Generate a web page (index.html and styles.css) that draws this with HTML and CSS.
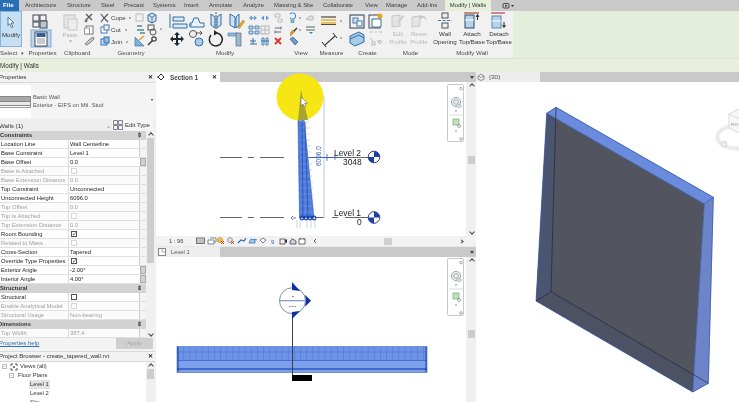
FILE: index.html
```html
<!DOCTYPE html>
<html lang="en">
<head>
<meta charset="utf-8">
<title>Revit - create_tapered_wall</title>
<link rel="stylesheet" href="styles.css">
</head>
<body>
<div class="app">
  <nav class="tabs">
    <span class="file">File</span>
    <span class="tab">Architecture</span><span class="tab">Structure</span><span class="tab">Steel</span><span class="tab">Precast</span><span class="tab">Systems</span><span class="tab">Insert</span><span class="tab">Annotate</span><span class="tab">Analyze</span><span class="tab">Massing &amp; Site</span><span class="tab">Collaborate</span><span class="tab">View</span><span class="tab">Manage</span><span class="tab">Add-Ins</span>
    <span class="tab-active">Modify | Walls</span>
    <svg class="tab-opt" width="12" height="8" viewBox="0 0 12 8"><rect x="1" y="1.5" width="6" height="4.5" rx="1" fill="none" stroke="#444"/><rect x="3" y="3" width="2" height="1.5" fill="#444"/><path d="M9 3h3l-1.500 2z" fill="#333"/></svg>
  </nav>

  <section class="ribbon">
    <div class="panel p-select">
      <div class="modify-btn">
        <svg width="10" height="12" viewBox="0 0 10 12"><path d="M2 1l6 6H5l2 4-1.500.7-2-4L2 9.500z" fill="#f4f8fc" stroke="#4a6f8f" stroke-width=".9"/></svg>
        <span>Modify</span>
      </div>
      <div class="plabel sel-label">Select <i>▾</i></div>
    </div>

    <div class="panel p-props">
      <svg class="ico" width="35" height="37" viewBox="25 11 35 37">
        <g fill="none" stroke="#445" stroke-width="1"><rect x="33" y="15" width="6" height="6"/><rect x="40" y="15" width="6" height="6"/><rect x="33" y="22" width="6" height="5"/><rect x="40" y="21" width="7" height="7" fill="#b8c6d2"/></g>
        <rect x="31" y="30" width="20" height="17" fill="#bcd8ef" stroke="#6d9ecb" stroke-width=".8"/>
        <rect x="35" y="32" width="12" height="14" fill="#fff" stroke="#223" stroke-width=".8"/>
        <rect x="36.500" y="33" width="9" height="4" fill="#2f5f96"/>
        <path d="M37 39h8M37 41h8M37 43h8" stroke="#778" stroke-width=".8"/>
      </svg>
      <div class="plabel">Properties</div>
    </div>

    <div class="panel p-clip">
      <svg class="ico" width="24" height="37" viewBox="60 11 24 37">
        <rect x="64" y="15" width="11" height="13" fill="#e6e6e6" stroke="#c4c4c4"/><rect x="68" y="19" width="9" height="11" fill="#ececec" stroke="#c8c8c8"/>
        <text x="70" y="37" class="gtxt" text-anchor="middle">Paste</text>
        <path d="M69 40.500h3l-1.500 1.500z" fill="#888"/>
      </svg>
      <div class="plabel clip-label">Clipboard</div>
    </div>

    <div class="panel p-geo">
      <svg class="ico" width="81" height="37" viewBox="84 11 81 37">
        <path d="M86 14l6 6M92 14l-6 6" stroke="#555" stroke-width="1.300"/><circle cx="86" cy="21" r="1" fill="none" stroke="#555"/>
        <rect x="86" y="26" width="7" height="8" fill="#fff" stroke="#777"/><rect x="84.500" y="28" width="5" height="6" fill="#fff" stroke="#999"/>
        <path d="M85 44l5-5 3-2 1 2-3 3-4 3z" fill="#bcc" stroke="#667" stroke-width=".8"/>
        <path d="M101 14l3 4-3 4M108 14l-4 4 4 4" fill="none" stroke="#556" stroke-width="1.200"/>
        <rect x="101" y="27" width="6" height="6" fill="#fff" stroke="#4a7dae"/><rect x="104" y="25" width="5" height="5" fill="#e8f0f8" stroke="#4a7dae"/>
        <rect x="101" y="39" width="6" height="6" fill="#cfe0f2" stroke="#2f6fb0"/><rect x="104" y="37" width="5" height="6" fill="#8fb8e4" stroke="#2f6fb0"/>
        <text x="111" y="20" class="rtxt">Cope</text><text x="111" y="32" class="rtxt">Cut</text><text x="111" y="44" class="rtxt">Join</text>
        <circle cx="130" cy="18" r=".7" fill="#444"/><circle cx="126" cy="30" r=".7" fill="#444"/><circle cx="127" cy="42" r=".7" fill="#444"/>
        <rect x="136" y="14" width="7" height="7" fill="#f2f2f2" stroke="#bbb"/>
        <path d="M148 15l4-2 4 2v6l-4 2-4-2z" fill="#cfe0f0" stroke="#3e6f9f"/><path d="M148 15l4 2 4-2M152 17v6" fill="none" stroke="#3e6f9f" stroke-width=".8"/>
        <path d="M137 26h5M137 30h7M140 33h5" stroke="#4c8c96" stroke-width="1.300"/>
        <rect x="148" y="25" width="6" height="5" fill="none" stroke="#555"/><circle cx="153" cy="32" r="3" fill="none" stroke="#555"/>
        <circle cx="161" cy="29" r=".7" fill="#444"/>
        <path d="M135 37v9h9z" fill="#7fb0d8" stroke="#3c79ae" stroke-width=".7"/><path d="M139 40l5-4" stroke="#e09a22" stroke-width="1.500"/>
        <path d="M148 45l5-5" stroke="#444" stroke-width="1.600"/><circle cx="154" cy="39" r="2.200" fill="none" stroke="#444" stroke-width="1.200"/>
      </svg>
      <div class="plabel geo-label">Geometry</div>
    </div>

    <div class="panel p-mod">
      <svg class="ico" width="125" height="37" viewBox="165 11 125 37">
        <path d="M170 14v14M173 17h11v4h-11zM173 24h14v4h-14z" fill="#dbe9f5" stroke="#2f6ea5"/>
        <path d="M190 27h14v-4h-4l-2-5h-4l-2 5h-2z" fill="#eaf2f8" stroke="#2f6ea5"/><path d="M189 25h3" stroke="#3b7bb0"/>
        <path d="M211 14l4 3v11l-4-3zM221 14l-4 3v11l4-3z" fill="#cfe2f2" stroke="#2f6ea5"/><path d="M216 12v18" stroke="#555" stroke-dasharray="2 1"/>
        <path d="M230 14l5 3v11l-5-3zM239 14l-3 3v11l3-2z" fill="#cfe2f2" stroke="#2f6ea5"/><path d="M238 27l5-7 1.500 1.500-5 7z" fill="#e8a92a" stroke="#9c6d10" stroke-width=".5"/>
        <path d="M177 32l3 3h-2v3h3v-2l3 3-3 3v-2h-3v3h2l-3 3-3-3h2v-3h-3v2l-3-3 3-3v2h3v-3h-2z" fill="#1f2a34"/>
        <circle cx="193" cy="34" r="3.500" fill="none" stroke="#555"/><circle cx="199" cy="42" r="4" fill="#a9cbe7" stroke="#2f6ea5"/><path d="M196 33h6l-2-2M202 33l-2 2" fill="none" stroke="#333" stroke-width=".8"/>
        <path d="M211 35a6.500 6.500 0 1 0 6-2" fill="none" stroke="#222" stroke-width="1.500"/><path d="M214 30l4 3-4 2.500z" fill="#222"/>
        <path d="M228 33h10v3h-10z" fill="#8fb8de" stroke="#3d7aae" stroke-width=".6"/><path d="M236 33v13h5V33z" fill="#9ab8d0" stroke="#557" stroke-width=".6"/>
        <path d="M249 18l3-2.500v5zM257 18l-3-2.500v5z" fill="#5f9bd0"/><rect x="251.500" y="17" width="3" height="2" fill="#9bc"/>
        <path d="M261 18l3-2.500v5zM269 18l-3-2.500v5z" fill="#5f9bd0"/>
        <path d="M275 14h5v3h-5zM278 19h4v3h-4z" fill="none" stroke="#bbb"/>
        <path d="M249 26h4v3h-4zM255 26h4v3h-4zM249 31h4v3h-4zM255 31h4v3h-4z" fill="#bcd6ec" stroke="#3a78b0" stroke-width=".8"/>
        <path d="M261 26h8v8h-8z" fill="#f0f0f0" stroke="#b4b4b4"/><path d="M265 26v8M261 30h8" stroke="#bbb"/>
        <path d="M275 28h6M275 32h6" stroke="#556" stroke-width=".9"/><path d="M281 26.500v3M275 30.500v3" stroke="#556" stroke-width=".8"/>
        <path d="M250 41h6M253 38v6M250 44h7" stroke="#2f6ea5" stroke-width="1.100"/>
        <path d="M262 38h2v7h-2zM266 38h2v7h-2z" fill="#dcebf7" stroke="#2f6ea5" stroke-width=".8"/><path d="M261 41h8" stroke="#2f6ea5"/>
        <path d="M275 38l6 6M281 38l-6 6" stroke="#d9382e" stroke-width="1.900"/>
      </svg>
      <div class="plabel mod-label">Modify</div>
    </div>

    <div class="panel p-view">
      <svg class="ico" width="28" height="37" viewBox="290 11 28 37">
        <circle cx="292.500" cy="16" r="3.200" fill="#e8f3fb" stroke="#3c7fb8"/><path d="M291 20h3v2.500h-3z" fill="#8ca" stroke="#3c7fb8" stroke-width=".6"/>
        <circle cx="300" cy="18" r=".7" fill="#444"/>
        <path d="M306 19l4-3h3v4h-4z" fill="#dcdcdc" stroke="#bcbcbc"/>
        <path d="M288 35l5-5 2 1.500-5 5z" fill="#e69a24" stroke="#a56a10" stroke-width=".5"/><path d="M294 31l3-3" stroke="#333" stroke-width="1.400"/>
        <circle cx="300" cy="30" r=".7" fill="#444"/>
        <path d="M306 27h9M306 30h9" stroke="#566" stroke-width="1.200"/><path d="M309 32h4l-2 2z" fill="#3a7bb5"/>
        <path d="M290 39l3-2 5 5-3 3z" fill="#6a9dcb" stroke="#2d5d8c" stroke-width=".7"/>
      </svg>
      <div class="plabel view-label">View</div>
    </div>

    <div class="panel p-meas">
      <svg class="ico" width="27" height="37" viewBox="318 11 27 37">
        <path d="M321 17h15" stroke="#222" stroke-width="1"/><path d="M321 20h15M321 23h15" stroke="#e3b432" stroke-width="1.500"/><path d="M321 24.500h15" stroke="#222" stroke-width=".8"/>
        <circle cx="341" cy="21" r=".7" fill="#444"/>
        <path d="M325 45l10-9" stroke="#444" stroke-width="1.200"/><path d="M322 42l4 5M333 33l4 5" stroke="#222" stroke-width="1"/>
        <circle cx="341" cy="38" r=".7" fill="#444"/>
      </svg>
      <div class="plabel">Measure</div>
    </div>

    <div class="panel p-create">
      <svg class="ico" width="45" height="37" viewBox="345 11 45 37">
        <rect x="350" y="15" width="14" height="13" fill="none" stroke="#2d3b4a"/><rect x="353" y="18" width="5" height="5" fill="#cfe0ef" stroke="#3b7bb0"/><rect x="357" y="21" width="5" height="5" fill="#fff" stroke="#3b7bb0"/>
        <rect x="369" y="15" width="11" height="13" fill="none" stroke="#445"/>
        <circle cx="380" cy="16" r="2.500" fill="#eaa31f"/><path d="M372 19h9v8h-9z" fill="#fff" stroke="#3a6f9f"/>
        <path d="M350 36l9-4 5 3v7l-9 4-5-3z" fill="#a8cbe9" stroke="#2f6ea5"/><path d="M350 39l9-4 5 3" fill="none" stroke="#2f6ea5"/>
        <path d="M370 32h3M375 32h2M379 32h3" stroke="#bbb"/><path d="M370 38l3 3M377 41h3" stroke="#bbb"/><rect x="372" y="42" width="3" height="3" fill="none" stroke="#bbb"/><circle cx="380" cy="42" r="1.500" fill="none" stroke="#bbb"/>
      </svg>
      <div class="plabel">Create</div>
    </div>

    <div class="panel p-mode">
      <div class="btns">
        <div class="btn dis"><svg width="14" height="15" viewBox="0 0 14 15"><path d="M1 3l8-1v11l-8 1z" fill="#e4e4e4" stroke="#c8c8c8"/><path d="M6 9l6-7 1.500 1.500-6 7z" fill="#cfcfcf"/></svg><span>Edit</span><span>Profile</span></div>
        <div class="btn dis"><svg width="16" height="15" viewBox="0 0 16 15"><path d="M1 4l8-1v10l-8 1z" fill="#e4e4e4" stroke="#c8c8c8"/><path d="M9 4a4 4 0 0 1 6 3M9 2v3h3" fill="none" stroke="#c4c4c4" stroke-width="1.200"/></svg><span>Reset</span><span>Profile</span></div>
      </div>
      <div class="plabel">Mode</div>
    </div>

    <div class="panel p-wall">
      <div class="btns">
        <div class="btn"><svg width="14" height="17" viewBox="0 0 14 17"><rect x="4" y="1" width="6" height="5" fill="#eee" stroke="#555"/><rect x="4" y="11" width="6" height="5" fill="#eee" stroke="#555"/><path d="M0 8.500h14" stroke="#3b7bb0" stroke-dasharray="3 1.500"/></svg><span>Wall</span><span>Opening</span></div>
        <div class="btn"><svg width="17" height="17" viewBox="0 0 17 17"><path d="M0 1h15" stroke="#b3514a" stroke-width="1.300"/><rect x="1" y="3" width="9" height="13" fill="#b5d3ed" stroke="#2f4a66"/><path d="M1 8h9" stroke="#fff"/><path d="M13.500 8V3M12 5l1.500-2.500L15 5" fill="none" stroke="#222"/></svg><span>Attach</span><span>Top/Base</span></div>
        <div class="btn"><svg width="17" height="17" viewBox="0 0 17 17"><path d="M0 1h14" stroke="#b3514a" stroke-width="1.300"/><rect x="1" y="4" width="9" height="12" fill="#b5d3ed" stroke="#5f88ad"/><path d="M1 9h9" stroke="#fff"/><path d="M13 10v5M11.500 13l1.500 2.500 1.500-2.500" fill="none" stroke="#222"/></svg><span>Detach</span><span>Top/Base</span></div>
      </div>
      <div class="plabel">Modify Wall</div>
    </div>
  </section>

  <div class="context">Modify | Walls</div>

  <main class="main">
    <aside class="side">
      <div class="title"><span>Properties</span><b>✕</b></div>
      <div class="type-sel">
        <div class="swatch"><i class="s1"></i><i class="s2"></i><i class="s3"></i></div>
        <div class="type-txt"><span>Basic Wall</span><span>Exterior - EIFS on Mtl. Stud</span></div>
        <em class="type-arrow"></em>
      </div>
      <div class="filter"><span class="walls">Walls (1)</span><span class="chev">⌄</span>
        <span class="edit-type"><svg width="10" height="10" viewBox="0 0 10 10"><path d="M.5.500h4v4h-4zM5.500.500h4v4h-4zM.5 5.500h4v4h-4zM5.500 5.500h4v4h-4z" fill="#f4f4f4" stroke="#667" stroke-width=".8"/></svg>Edit Type</span></div>
      <div class="grid-wrap">
        <div class="grid">
          <div class="hdr">Constraints<i>⇕</i></div>
          <div class="row"><span>Location Line</span><span>Wall Centerline</span><u></u></div>
          <div class="row"><span>Base Constraint</span><span>Level 1</span><u></u></div>
          <div class="row"><span>Base Offset</span><span>0.0</span><u class="spin"></u></div>
          <div class="row off"><span>Base is Attached</span><span><s class="cb dim"></s></span><u></u></div>
          <div class="row off"><span>Base Extension Distance</span><span>0.0</span><u></u></div>
          <div class="row"><span>Top Constraint</span><span>Unconnected</span><u></u></div>
          <div class="row"><span>Unconnected Height</span><span>6096.0</span><u></u></div>
          <div class="row off"><span>Top Offset</span><span>0.0</span><u></u></div>
          <div class="row off"><span>Top is Attached</span><span><s class="cb dim"></s></span><u></u></div>
          <div class="row off"><span>Top Extension Distance</span><span>0.0</span><u></u></div>
          <div class="row"><span>Room Bounding</span><span><s class="cb on">✓</s></span><u></u></div>
          <div class="row off"><span>Related to Mass</span><span><s class="cb dim"></s></span><u></u></div>
          <div class="row"><span>Cross-Section</span><span>Tapered</span><u></u></div>
          <div class="row"><span>Override Type Properties</span><span><s class="cb on">✓</s></span><u></u></div>
          <div class="row"><span>Exterior Angle</span><span>-2.00°</span><u class="spin"></u></div>
          <div class="row"><span>Interior Angle</span><span>4.00°</span><u class="spin"></u></div>
          <div class="hdr">Structural<i>⇕</i></div>
          <div class="row"><span>Structural</span><span><s class="cb"></s></span><u></u></div>
          <div class="row off"><span>Enable Analytical Model</span><span><s class="cb dim"></s></span><u></u></div>
          <div class="row off"><span>Structural Usage</span><span>Non-bearing</span><u></u></div>
          <div class="hdr dims">Dimensions<i>⇕</i></div>
          <div class="row off"><span>Top Width</span><span>387.4</span><u></u></div>
        </div>
        <div class="sbar"><span class="up"></span><span class="thumb"></span><span class="down"></span></div>
      </div>
      <div class="help"><a href="#">Properties help</a><span class="apply">Apply</span></div>
      <div class="title pb"><span>Project Browser - create_tapered_wall.rvt</span><b>✕</b></div>
      <div class="tree-wrap">
        <ul class="tree">
          <li class="l0"><s class="exp">−</s><svg width="8" height="8" viewBox="0 0 8 8"><path d="M1 3V1h2M5 1h2v2M7 5v2H5M3 7H1V5" fill="none" stroke="#555"/><circle cx="4" cy="4" r="1" fill="#555"/></svg>Views (all)</li>
          <li class="l1"><s class="exp">−</s>Floor Plans</li>
          <li class="l2 sel"><span>Level 1</span></li>
          <li class="l2"><span>Level 2</span></li>
          <li class="l2"><span>Site</span></li>
        </ul>
        <div class="tbar"><span class="up"></span><span class="thumb"></span></div>
      </div>
    </aside>

    <div class="views">
      <section class="pane p-sec">
        <header class="strip">
          <div class="vtab"><svg width="8" height="8" viewBox="0 0 8 8"><path d="M4 1l3 3-3 3-3-3z" fill="#fff" stroke="#333"/><path d="M0 4h2" stroke="#333"/></svg><span class="sec-name">Section 1</span><b>✕</b></div>
          <em class="strip-arrow"></em>
        </header>
        <div class="canvas c-sec">
          <svg width="309" height="154" viewBox="156 82 309 154" class="draw">
            <g stroke="#555" stroke-width=".9" fill="none">
              <path d="M220 157.500h22M248 157.500h6M260 157.500h24M298 157.500h47M345 157.500h23"/>
              <path d="M220 217.500h22M248 217.500h6M260 217.500h24M316 217.500h8M332 217.500h6M345 217.500h23"/>
            </g>
            <path d="M324 97v121" stroke="#b8c6e4" stroke-width="1"/>
            <path d="M301 96h24" stroke="#c9d0dc" stroke-width=".8"/>
            <path d="M297 220v8M300 220v8M307 220v8M311 220v8M315 220v8" stroke="#b8c6e4" stroke-width=".8"/>
            <path d="M304 157.500h36" stroke="#3b62b0" stroke-width=".8"/><path d="M327 154v7M335 155v5" stroke="#3b62b0" stroke-width=".8"/>
            <polygon points="301,90 298,120 299.500,218 314,218" fill="#4f7ddc" stroke="#2f55b4" stroke-width=".6"/>
            <path d="M300 122h9M300 128h10M300 134h10M300 140h10M300 146h11M300 152h11M300 158h11M300 164h12M300 170h12M300 176h12M300 182h13M300 188h13M300 194h13M300 200h13M300 206h14M300 212h14" stroke="#8eabe9" stroke-width=".5"/>
            <path d="M302 122l1 96M305 122l3 96" stroke="#1d46ad" stroke-width=".7"/>
            <g fill="none" stroke="#1c44ad" stroke-width="1.200"><circle cx="302" cy="218" r="1.800"/><circle cx="306" cy="218" r="1.800"/><circle cx="310" cy="218" r="1.800"/><circle cx="314" cy="218" r="1.800"/></g>
            <path d="M296 218l-3 0M293 216l-2 2 2 2" fill="none" stroke="#3b62b0" stroke-width=".8"/>
            <circle cx="300" cy="97" r="23.500" fill="#f6e714"/>
            <polygon points="301,90 298,120 308,120" fill="#a9a32f"/>
            <path d="M301 97l0 9 2-2 1.500 3 1.500-.7-1.500-3h3z" fill="#fff" stroke="#667" stroke-width=".6"/>
            <text x="0" y="0" class="dim-txt" transform="translate(321 166) rotate(-90)">6096.0</text>
            <text x="334" y="156" class="lvl">Level 2</text><text x="343" y="165" class="lvl">3048</text>
            <text x="334" y="216" class="lvl">Level 1</text><text x="357" y="225" class="lvl">0</text>
            <g><circle cx="374" cy="157" r="5.800" fill="#fff" stroke="#2a3f93"/><path d="M374 157V151.200A5.800 5.800 0 0 1 379.800 157zM374 157v5.800a5.800 5.800 0 0 1-5.800-5.800z" fill="#1d3fa6"/></g>
            <g><circle cx="374" cy="217.500" r="5.800" fill="#fff" stroke="#2a3f93"/><path d="M374 217.500V211.700A5.800 5.800 0 0 1 379.800 217.500zM374 217.500v5.800a5.800 5.800 0 0 1-5.800-5.800z" fill="#1d3fa6"/></g>
          </svg>
          <div class="navbar">
            <svg width="16" height="57" viewBox="0 0 16 57"><circle cx="13" cy="3.500" r="1.300" fill="none" stroke="#aaa"/><circle cx="8" cy="17" r="4.600" fill="#f2f2f2" stroke="#9aa"/><circle cx="8" cy="17" r="2.300" fill="none" stroke="#9aa"/><ellipse cx="11" cy="21" rx="2.500" ry="1.500" fill="#dbe6ef" stroke="#8ca4b8" stroke-width=".6"/><circle cx="8" cy="26" r=".7" fill="#666"/><path d="M1 30h14" stroke="#ddd"/><rect x="5" y="34" width="6" height="6" fill="#bfe0bc" stroke="#78a878" stroke-width=".7"/><circle cx="11" cy="41" r="1.500" fill="none" stroke="#778" stroke-width=".6"/><circle cx="8" cy="46" r=".7" fill="#666"/><circle cx="13" cy="54" r="1.300" fill="none" stroke="#aaa"/></svg>
          </div>
          <div class="vbar"><span class="up"></span><span class="thumb t1"></span><span class="down"></span></div>
        </div>
        <footer class="status">
          <span class="scale">1 : 96</span>
          <svg width="122" height="9" viewBox="196 236 122 9" class="vc">
            <rect x="196.500" y="237" width="8" height="5.500" fill="#ddd" stroke="#444" stroke-width=".7"/><path d="M197 239h7M197 241h7" stroke="#555" stroke-width=".4"/>
            <path d="M208 239h6v4h-6zM210 237h6v4h-2" fill="#fff" stroke="#4a5a70" stroke-width=".7"/>
            <circle cx="220" cy="239" r="2.600" fill="#f0c13e" stroke="#a9811d" stroke-width=".5"/><path d="M221 240l3 3M224 240l-3 3" stroke="#d1372d"/>
            <circle cx="230" cy="239" r="2.400" fill="#dbe7f1" stroke="#567" stroke-width=".6"/><path d="M231 240l3 3M234 240l-3 3" stroke="#d1372d"/>
            <path d="M238 242l3-3 3 1 2-3" fill="none" stroke="#2f6fb0" stroke-width="1.300"/>
            <path d="M249 242l2-4 4 1v3zM254 238l3 1" fill="#a9cbe7" stroke="#2f6fb0" stroke-width=".8"/>
            <path d="M260 239l3-2 3 2-3 3z" fill="#fff" stroke="#445" stroke-width=".7"/>
            <text x="271" y="243" class="nine">9</text>
            <rect x="280" y="238" width="5" height="5" fill="#eee" stroke="#333" stroke-width=".7"/><path d="M285 239l2-1v4l-2-1z" fill="#333"/>
            <path d="M290 243v-3l3-2 3 2v3z" fill="#c7d3dd" stroke="#434" stroke-width=".7"/><path d="M291 238h1" stroke="#c94a3e"/>
            <path d="M299 238h6v5h-6z" fill="#fff" stroke="#333" stroke-width=".7"/><path d="M299 238l2-1M305 238l-2-1" stroke="#333" stroke-width=".6"/>
            <path d="M316 238l-2 2 2 2" fill="none" stroke="#333" stroke-width=".8"/>
          </svg>
          <span class="hscroll"><i></i></span>
          <em class="hr"></em>
        </footer>
      </section>
      <section class="pane p-lvl">
        <header class="strip">
          <div class="vtab lv"><svg width="8" height="8" viewBox="0 0 8 8"><rect x=".5" y=".5" width="7" height="7" fill="#fff" stroke="#888"/><path d="M4 1v3h3" fill="none" stroke="#aaa"/></svg><span>Level 1</span></div>
          <em class="strip-arrow"></em>
        </header>
        <div class="canvas c-lvl">
          <svg width="309" height="145" viewBox="156 257 309 145" class="draw">
            <defs>
              <pattern id="cells" x="177" y="347" width="6.150" height="12" patternUnits="userSpaceOnUse"><rect width="6.150" height="12" fill="#6d93e6"/><path d="M.5 0v12" stroke="#4a73cf" stroke-width=".6"/></pattern>
            </defs>
            <rect x="177" y="346.500" width="250" height="26" fill="#7ca0ea" stroke="#3b66c8" stroke-width=".6"/>
            <rect x="177" y="347" width="250" height="13" fill="url(#cells)"/>
            <path d="M177 352h250" stroke="#4a73cf" stroke-width=".5"/>
            <path d="M177 360.500h250" stroke="#3a62c4" stroke-width=".8"/>
            <path d="M177 369h250" stroke="#0b2fa0" stroke-width="1.200"/>
            <path d="M178 347v25M426 347v25" stroke="#173fb0" stroke-width="1"/>
            <path d="M292.500 314v62" stroke="#3a3f4e" stroke-width="1"/>
            <rect x="292" y="375" width="20" height="6" fill="#000"/>
            <circle cx="292.500" cy="300.700" r="13" fill="#fff" stroke="#5b6d9c" stroke-width=".8"/>
            <path d="M279.500 300.700h26" stroke="#8095c8" stroke-width="1.200"/>
            <path d="M292 282l8 9-8-1zM311 300.700l-6-6 1 6 -1 6zM292 319l8-8-8 1z" fill="#0f2fa6"/>
            <path d="M292 296.500h2" stroke="#778" stroke-width=".8"/><path d="M289 306.500h7" stroke="#889" stroke-width="1" stroke-dasharray="1 .5"/>
          </svg>
          <div class="navbar n2">
            <svg width="16" height="57" viewBox="0 0 16 57"><circle cx="13" cy="3.500" r="1.300" fill="none" stroke="#aaa"/><circle cx="8" cy="17" r="4.600" fill="#f2f2f2" stroke="#9aa"/><circle cx="8" cy="17" r="2.300" fill="none" stroke="#9aa"/><ellipse cx="11" cy="21" rx="2.500" ry="1.500" fill="#dbe6ef" stroke="#8ca4b8" stroke-width=".6"/><circle cx="8" cy="26" r=".7" fill="#666"/><path d="M1 30h14" stroke="#ddd"/><rect x="5" y="34" width="6" height="6" fill="#bfe0bc" stroke="#78a878" stroke-width=".7"/><circle cx="11" cy="41" r="1.500" fill="none" stroke="#778" stroke-width=".6"/><circle cx="8" cy="46" r=".7" fill="#666"/><circle cx="13" cy="54" r="1.300" fill="none" stroke="#aaa"/></svg>
          </div>
          <div class="vbar"><span class="up"></span><span class="thumb t2"></span></div>
        </div>
      </section>
    </div>

    <section class="pane p-3d">
      <header class="strip">
        <div class="vtab d3"><svg width="8" height="8" viewBox="0 0 8 8"><path d="M1 3l3-2 3 2v3l-3 1.500L1 6z" fill="#eee" stroke="#777" stroke-width=".8"/><path d="M1 3l3 1.500L7 3" fill="none" stroke="#777" stroke-width=".7"/></svg><span>{3D}</span></div>
      </header>
      <div class="canvas c-3d">
        <svg width="263" height="320" viewBox="476 82 263 320" class="draw">
          <polygon points="546.700,113.300 556,107.300 713.300,197.300 704.300,204" fill="#6b8cdc" stroke="#3c5fb8" stroke-width=".5"/>
          <polygon points="704.300,204 713.300,197.300 708.300,383.300 692.700,392" fill="#6d85c8" stroke="#3c5fb8" stroke-width=".5"/>
          <polygon points="546.700,113.300 704.300,204 692.700,392 536,301" fill="#52555f"/>
          <polygon points="546.700,113.300 556,119 551,291.700 536,301" fill="#4a5570"/>
          <polygon points="536,301 551,291.700 695,375 692.700,392" fill="#4c5163"/>
          <polygon points="704.300,204 713.300,197.300 708.300,383.300 692.700,392" fill="#6d85c8"/>
          <path d="M546.700 113.300L704.300 204M704.300 204L692.700 392M692.700 392L536 301L546.700 113.300M546.700 113.300L556 107.300L713.300 197.300L704.300 204" fill="none" stroke="#3a5cb4" stroke-width=".7"/>
          <path d="M713.300 197.300L708.300 383.300L692.700 392" fill="none" stroke="#3a5cb4" stroke-width=".7"/>
          <path d="M556 107.300L551 291.700L536 301M551 291.700L708.300 383.300" fill="none" stroke="#23283a" stroke-width=".7"/>
          <g class="cube">
            <ellipse cx="738" cy="137" rx="21" ry="12" fill="none" stroke="#ececec" stroke-width="3.500"/>
            <ellipse cx="738" cy="137" rx="19" ry="10" fill="none" stroke="#d8d8d8" stroke-width=".5"/>
            <circle cx="724" cy="144" r="3" fill="#ececec" stroke="#c8c8c8" stroke-width=".6"/>
            <path d="M729 114l12-6 12 6v14l-12 6-12-6z" fill="#f7f7f7" stroke="#cfcfcf" stroke-width=".7"/>
            <path d="M729 114l12 6 12-6M741 120v14" fill="none" stroke="#d2d2d2" stroke-width=".7"/>
            <text x="731" y="126" class="cube-txt">FRO</text>
          </g>
        </svg>
      </div>
    </section>
  </main>
</div>
</body>
</html>
```

FILE: styles.css
```css
* { box-sizing: border-box; }
html, body { margin: 0; padding: 0; background: #fff; }
.app {
  width: 739px; height: 402px; overflow: hidden;
  display: flex; flex-direction: column;
  font-family: "Liberation Sans", Arial, sans-serif;
  font-size: 6.2px; color: #333;
  background: #f0f0f0;
  filter: blur(.35px);
}
.tabs {
  height: 11px; flex: none; display: grid; align-items: center;
  grid-template-columns: 25px 42px 34px 23px 29px 31px 25px 34px 31px 49px 42px 21px 31px 28px 57px 12px;
  background: #c9c9c9;
}
.file { width: 19px; height: 11px; background: #2a6fb5; color: #fff; font-weight: bold; padding-left: 3px; line-height: 10px; }
.tab { white-space: nowrap; line-height: 11px; color: #3c3c3c; font-size: 5.900px; }
.tab-active { width: 46px; height: 11px; background: #e6efda; text-align: center; line-height: 11px; white-space: nowrap; color: #333; font-size: 5.900px; }

.ribbon { height: 47px; flex: none; display: flex; background: #e5eeda; }
.panel { display: flex; flex-direction: column; background: #f1f1f1; flex: none; }
.ico { display: block; flex: none; }
.plabel { height: 10px; flex: none; text-align: center; line-height: 10px; white-space: nowrap; color: #4a4a4a; margin-top: auto; }
.p-select { width: 25px; }
.p-props { width: 35px; }
.p-clip { width: 24px; }
.p-geo { width: 81px; }
.p-mod { width: 125px; }
.p-view { width: 28px; }
.p-meas { width: 27px; }
.p-create { width: 45px; }
.p-mode { width: 41px; }
.p-wall { width: 82px; }
.clip-label { position: relative; text-align: left; padding-left: 4px; }
.geo-label { padding-left: 13px; }
.mod-label { padding-right: 5px; }
.view-label { padding-right: 6px; }
.sel-label { text-align: left; }
.sel-label i { font-style: normal; font-size: 5px; margin-left: 2px; }
.modify-btn { width: 22px; height: 36px; background: #c6dff3; border: 1px solid #86b2d8; display: flex; flex-direction: column; align-items: center; padding-top: 4px; gap: 3px; color: #333; }
.rtxt { font-size: 6.200px; fill: #3c3c3c; }
.gtxt { font-size: 5.800px; fill: #b0b0b0; }
.btns { display: flex; height: 37px; flex: none; }
.btn { display: flex; flex-direction: column; align-items: center; line-height: 8px; white-space: nowrap; color: #333; padding-top: 1px; flex: none; width: 27px; }
.btn svg { height: 17px; margin-bottom: 1px; flex: none; }
.btn.dis { color: #b9b9b9; width: 21px; }
.p-mode .btns { margin-left: -2.500px; }
.p-wall .btns { padding-left: .5px; }

.context { height: 14px; flex: none; background: #e8efdd; line-height: 13px; border-top: 1px solid #d9e2cd; color: #333; font-size: 6.300px; white-space: nowrap; }

.main { flex: 1; display: flex; min-height: 0; background: #f0f0f0; }
.side { width: 155px; flex: none; display: flex; flex-direction: column; background: #f0f0f0; font-size: 5.800px; margin-right: 1px; }
.title { height: 11px; flex: none; display: flex; justify-content: space-between; align-items: center; padding-right: 2px; background: #f2f2f2; line-height: 11px; border-bottom: 1px solid #d8d8d8; font-size: 6px; white-space: nowrap; }
.title span { margin-left: -1px; }
.title b { font-size: 6px; color: #222; }
.type-sel { height: 36px; flex: none; display: flex; align-items: center; background: #f4f4f4; position: relative; }
.swatch { width: 31px; height: 33px; background: #fff; display: flex; flex-direction: column; justify-content: center; padding-top: 1px; flex: none; }
.swatch i { display: block; }
.s1 { height: 6px; background: #a8a8a8; border: 1px solid #888; border-left: 0; }
.s2 { height: 4px; background: #e8e8e8; border-bottom: 1px solid #888; border-right: 1px solid #888; }
.s3 { height: 2px; background: #fff; border-bottom: 1px solid #999; border-right: 1px solid #999; }
.type-txt { display: flex; flex-direction: column; margin-left: 2px; line-height: 8px; white-space: nowrap; color: #555; }
.type-arrow { position: absolute; right: 2px; top: 16px; border: 1.500px solid transparent; border-top: 2px solid #333; }
.filter { height: 12px; flex: none; display: flex; align-items: center; background: #eee; }
.walls { margin-left: -1px; width: 107px; font-size: 6.200px; }
.chev { font-size: 6px; color: #777; width: 6px; }
.edit-type { width: 41px; height: 12px; background: #f6f6f6; display: flex; align-items: center; gap: 2px; padding-left: 1px; font-size: 6px; white-space: nowrap; }
.grid-wrap { height: 207px; flex: none; display: flex; }
.grid { width: 146px; flex: none; }
.hdr { height: 9px; line-height: 9px; background: #d3d3d3; font-weight: 600; position: relative; color: #333; white-space: nowrap; }
.hdr i { position: absolute; right: 4px; top: 0; font-style: normal; font-size: 6px; line-height: 9px; color: #333; }
.dims { text-indent: -2px; }
.row { height: 9px; display: grid; grid-template-columns: 68px 71px 7px; border-bottom: 1px solid #e0e0e0; line-height: 8px; background: #fff; white-space: nowrap; color: #1c1c1c; }
.row > span { padding-left: 1px; overflow: hidden; }
.row > span + span { border-left: 1px solid #dcdcdc; }
.row u { display: block; background: #f4f4f4; border-left: 1px solid #ccc; }
.row u.spin { background: #d0d0d0; border: 1px solid #aaa; margin-left: 1px; }
.row.off { color: #a0a0a0; background: #fbfbfb; }
.cb { display: block; width: 6px; height: 6px; margin: 1px 0 0 1px; border: 1px solid #555; background: #fff; font-size: 6px; line-height: 5px; text-decoration: none; color: #333; text-align: center; }
.cb.dim { border-color: #d8d8d8; }
.sbar { flex: 1; display: flex; flex-direction: column; background: #f0f0f0; align-items: center; }
.up, .down { display: block; height: 7px; width: 100%; flex: none; position: relative; }
.up::after, .down::after { content: ""; position: absolute; left: 50%; top: 2px; width: 3px; height: 3px; margin-left: -1.500px; border-left: 1px solid #444; border-top: 1px solid #444; transform: rotate(45deg); }
.down::after { transform: rotate(225deg); top: 1px; }
.thumb { display: block; background: #cdcdcd; }
.sbar .thumb { width: 7px; height: 125px; margin-bottom: auto; }
.help { height: 13px; flex: none; display: flex; justify-content: space-between; align-items: flex-start; background: #f3f3f3; padding-right: 2px; }
.help a { margin-left: -1px; color: #2b6fb5; text-decoration: underline; font-size: 6px; line-height: 10px; }
.apply { width: 37px; height: 11px; background: #cfcfcf; color: #a4a4a4; text-align: center; line-height: 11px; font-size: 6px; }
.pb { border-top: 1px solid #d8d8d8; }
.tree-wrap { flex: 1; display: flex; background: #fff; min-height: 0; overflow: hidden; }
.tree { list-style: none; margin: 0; padding: 0; width: 146px; flex: none; color: #333; }
.tree li { height: 9px; line-height: 9px; display: flex; align-items: center; gap: 2px; white-space: nowrap; }
.l1 { padding-left: 9px; }
.l2 { padding-left: 29px; }
.l2 span { padding: 0 2px 0 1px; height: 9px; }
.sel span { background: #e3e3e3; width: 21px; }
.exp { width: 5px; height: 5px; border: 1px solid #bbb; font-size: 4px; line-height: 3px; text-align: center; text-decoration: none; color: #666; flex: none; margin-right: 2px; }
.l0 .exp { margin-left: 2px; margin-right: 1px; }
.tbar { flex: 1; background: #f0f0f0; display: flex; flex-direction: column; align-items: center; }
.tbar .thumb { width: 7px; height: 10px; }

.views { width: 320px; flex: none; display: flex; flex-direction: column; background: #e8e8e8; }
.pane { display: flex; flex-direction: column; background: #fff; }
.p-sec { height: 174px; flex: none; margin-bottom: 1px; }
.p-lvl { flex: 1; min-height: 0; }
.p-3d { flex: 1; min-width: 0; }
.strip { height: 10px; flex: none; background: #c9c9c9; display: flex; justify-content: space-between; align-items: center; }
.vtab { width: 64px; height: 10px; background: #fff; display: flex; align-items: center; gap: 3px; padding-left: 1px; color: #333; position: relative; font-size: 6.300px; white-space: nowrap; }
.vtab b { position: absolute; right: 3px; top: 0; line-height: 10px; font-size: 6px; color: #222; }
.sec-name { font-weight: 600; color: #444; margin-left: 2px; }
.vtab.lv { background: #eee; color: #555; gap: 5px; padding-left: 2px; font-size: 5.800px; }
.vtab.d3 { background: #ededed; color: #555; gap: 4px; font-size: 5.800px; }
.strip-arrow { width: 0; height: 0; border: 2px solid transparent; border-top: 3px solid #444; margin: 2px 2px 0 0; }
.canvas { flex: 1; min-height: 0; display: flex; position: relative; background: #fff; }
.c-sec { z-index: 1; }
.draw { display: block; flex: none; overflow: visible; }
.c-lvl .draw, .c-3d .draw { overflow: hidden; }
.navbar { position: absolute; left: 291px; top: 2px; width: 17px; height: 58px; border: 1px solid #c9c9c9; border-radius: 2px; background: #fff; }
.navbar.n2 { top: 1px; }
.vbar { width: 10px; flex: none; margin-left: auto; background: #f0f0f0; display: flex; flex-direction: column; }
.vbar .thumb { width: 7px; height: 8px; margin: 0 auto auto; }
.vbar .t1 { margin-top: 67px; }
.vbar .t2 { margin-top: 66px; }
.status { height: 10px; flex: none; display: flex; align-items: center; background: #f2f2f2; color: #444; }
.scale { margin-left: 13px; width: 27px; font-size: 5.800px; }
.vc { flex: none; }
.nine { font-size: 6px; fill: #2f6fb0; }
.hscroll { flex: 1; height: 7px; margin-left: 66px; display: block; }
.hscroll i { display: block; width: 8px; height: 7px; background: #cfcfcf; }
.hr { width: 3px; height: 3px; border-top: 1px solid #333; border-right: 1px solid #333; transform: rotate(45deg); margin-right: 13px; }
.lvl { font-size: 8.400px; fill: #222; }
.dim-txt { font-size: 6.500px; fill: #3b62b0; }
.cube-txt { font-size: 3.500px; fill: #888; }
```
